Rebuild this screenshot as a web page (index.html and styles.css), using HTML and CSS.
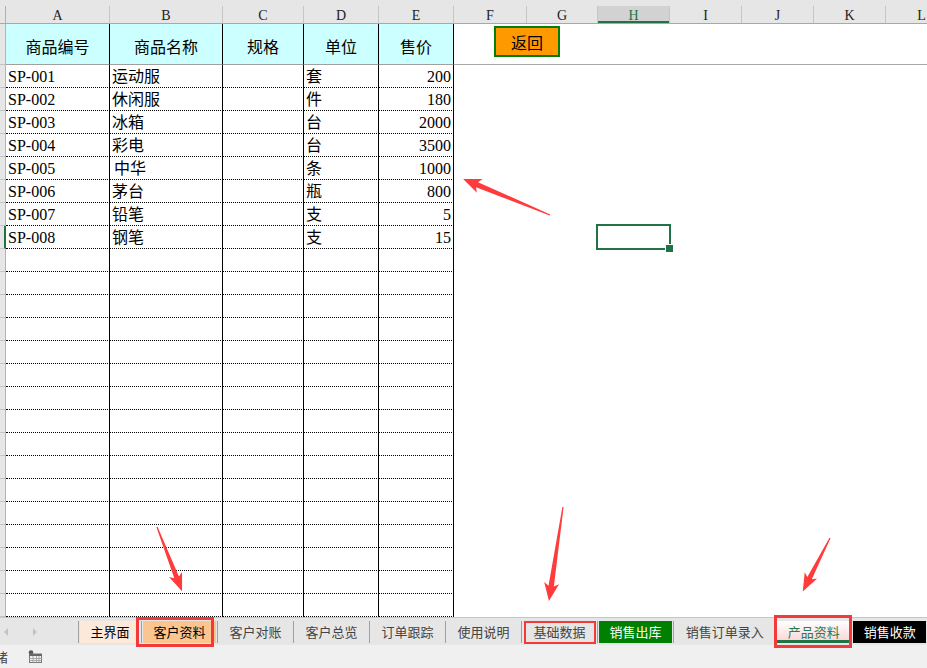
FILE: index.html
```html
<!DOCTYPE html>
<html lang="zh-CN">
<head>
  <meta charset="UTF-8" />
  <meta name="viewport" content="width=device-width, initial-scale=1" />
  <title>产品资料</title>
  <link rel="stylesheet" href="styles.css">
</head>
<body>
  <div class="app">
    <div class="sheet">
      <div class="colheads">
        <div class="ch corner"></div>
        <div class="ch w-a">A</div>
        <div class="ch w-b">B</div>
        <div class="ch w-c">C</div>
        <div class="ch w-d">D</div>
        <div class="ch w-e">E</div>
        <div class="ch w-f">F</div>
        <div class="ch w-g">G</div>
        <div class="ch w-h on">H</div>
        <div class="ch w-i">I</div>
        <div class="ch w-j">J</div>
        <div class="ch w-k">K</div>
        <div class="ch w-l">L</div>
      </div>

      <div class="body">
        <div class="grid">
          <div class="row head"><div class="rh"></div><div class="c">商品编号</div><div class="c">商品名称</div><div class="c">规格</div><div class="c">单位</div><div class="c">售价</div></div>
          <div class="row"><div class="rh"></div><div class="c">SP-001</div><div class="c">运动服</div><div class="c"></div><div class="c">套</div><div class="c num">200</div></div>
          <div class="row"><div class="rh"></div><div class="c">SP-002</div><div class="c">休闲服</div><div class="c"></div><div class="c">件</div><div class="c num">180</div></div>
          <div class="row"><div class="rh"></div><div class="c">SP-003</div><div class="c">冰箱</div><div class="c"></div><div class="c">台</div><div class="c num">2000</div></div>
          <div class="row"><div class="rh"></div><div class="c">SP-004</div><div class="c">彩电</div><div class="c"></div><div class="c">台</div><div class="c num">3500</div></div>
          <div class="row"><div class="rh"></div><div class="c">SP-005</div><div class="c indent">中华</div><div class="c"></div><div class="c">条</div><div class="c num">1000</div></div>
          <div class="row"><div class="rh"></div><div class="c">SP-006</div><div class="c">茅台</div><div class="c"></div><div class="c">瓶</div><div class="c num">800</div></div>
          <div class="row"><div class="rh"></div><div class="c">SP-007</div><div class="c">铅笔</div><div class="c"></div><div class="c">支</div><div class="c num">5</div></div>
          <div class="row"><div class="rh on"></div><div class="c">SP-008</div><div class="c">钢笔</div><div class="c"></div><div class="c">支</div><div class="c num">15</div></div>
          <div class="row"><div class="rh"></div><div class="c"></div><div class="c"></div><div class="c"></div><div class="c"></div><div class="c"></div></div>
          <div class="row"><div class="rh"></div><div class="c"></div><div class="c"></div><div class="c"></div><div class="c"></div><div class="c"></div></div>
          <div class="row"><div class="rh"></div><div class="c"></div><div class="c"></div><div class="c"></div><div class="c"></div><div class="c"></div></div>
          <div class="row"><div class="rh"></div><div class="c"></div><div class="c"></div><div class="c"></div><div class="c"></div><div class="c"></div></div>
          <div class="row"><div class="rh"></div><div class="c"></div><div class="c"></div><div class="c"></div><div class="c"></div><div class="c"></div></div>
          <div class="row"><div class="rh"></div><div class="c"></div><div class="c"></div><div class="c"></div><div class="c"></div><div class="c"></div></div>
          <div class="row"><div class="rh"></div><div class="c"></div><div class="c"></div><div class="c"></div><div class="c"></div><div class="c"></div></div>
          <div class="row"><div class="rh"></div><div class="c"></div><div class="c"></div><div class="c"></div><div class="c"></div><div class="c"></div></div>
          <div class="row"><div class="rh"></div><div class="c"></div><div class="c"></div><div class="c"></div><div class="c"></div><div class="c"></div></div>
          <div class="row"><div class="rh"></div><div class="c"></div><div class="c"></div><div class="c"></div><div class="c"></div><div class="c"></div></div>
          <div class="row"><div class="rh"></div><div class="c"></div><div class="c"></div><div class="c"></div><div class="c"></div><div class="c"></div></div>
          <div class="row"><div class="rh"></div><div class="c"></div><div class="c"></div><div class="c"></div><div class="c"></div><div class="c"></div></div>
          <div class="row"><div class="rh"></div><div class="c"></div><div class="c"></div><div class="c"></div><div class="c"></div><div class="c"></div></div>
          <div class="row"><div class="rh"></div><div class="c"></div><div class="c"></div><div class="c"></div><div class="c"></div><div class="c"></div></div>
          <div class="row"><div class="rh"></div><div class="c"></div><div class="c"></div><div class="c"></div><div class="c"></div><div class="c"></div></div>
          <div class="row"><div class="rh"></div><div class="c"></div><div class="c"></div><div class="c"></div><div class="c"></div><div class="c"></div></div>
        </div>

        <div class="blank">
          <div class="band">
            <button class="btn-back">返回</button>
          </div>
          <div class="sel"></div>
        </div>
      </div>
    </div>

    <div class="tabbar">
      <div class="nav">
        <svg width="40" height="10" viewBox="0 0 40 10">
          <polygon points="8,1 8,9 4,5" fill="#c3c3c3" />
          <polygon points="33,1 33,9 37,5" fill="#c3c3c3" />
        </svg>
      </div>
      <div class="tab t-home"><span>主界面</span></div>
      <div class="tab t-cust mark m1"><span>客户资料</span></div>
      <div class="tab"><span>客户对账</span></div>
      <div class="tab"><span>客户总览</span></div>
      <div class="tab"><span>订单跟踪</span></div>
      <div class="tab"><span>使用说明</span></div>
      <div class="tab mark m2"><span>基础数据</span></div>
      <div class="tab t-green"><span>销售出库</span></div>
      <div class="tab"><span>销售订单录入</span></div>
      <div class="tab t-active mark m3"><span>产品资料</span></div>
      <div class="tab t-black"><span>销售收款</span></div>
    </div>

    <div class="status">
      <span class="ready">就绪</span>
      <svg class="st-icon" width="14" height="13" viewBox="0 0 14 13">
        <circle cx="3" cy="2.5" r="2.3" fill="#555" />
        <rect x="1.5" y="4" width="12" height="8.5" fill="none" stroke="#777" />
        <rect x="1.5" y="4" width="12" height="2" fill="#666" />
        <path d="M1.5 8.5h12M1.5 10.5h12M5 6v6.5M8.5 6v6.5M11 6v6.5" stroke="#999" stroke-width="0.8" />
      </svg>
    </div>

    <svg class="arrows" width="927" height="668" viewBox="0 0 927 668">
      <g fill="#ff3b3b">
        <polygon transform="translate(550 215) rotate(202.5)" points="0,-0.6 79,-2.7 76,-7.5 94,0 76,7.5 79,2.7 0,0.6" />
        <polygon transform="translate(157 527) rotate(68.7)" points="0,-0.6 54,-2.5 51,-7 69,0 51,7 54,2.5 0,0.6" />
        <polygon transform="translate(563 507) rotate(98.5)" points="0,-0.6 80,-2.7 77,-7.5 95,0 77,7.5 80,2.7 0,0.6" />
        <polygon transform="translate(830 538) rotate(117)" points="0,-0.6 45,-2.5 42,-7 60,0 42,7 45,2.5 0,0.6" />
      </g>
    </svg>
  </div>
</body>
</html>
```

FILE: styles.css
```css
* {
  box-sizing: border-box;
}

body {
  margin: 0;
  background: #fff;
  font-family: "Liberation Serif", "Noto Sans CJK SC", serif;
}

.app {
  position: relative;
  width: 927px;
  height: 668px;
  overflow: hidden;
}

/* sheet */

.sheet {
  height: 617px;
  overflow: hidden;
}

.colheads {
  display: flex;
  height: 24px;
  padding-top: 6px;
  background: #e6e6e6;
  border-bottom: 1px solid #a8a8a8;
}

.ch {
  flex: none;
  height: 17px;
  padding-top: 2px;
  border-right: 1px solid #c6c6c6;
  text-align: center;
  font: 14px/15px "Liberation Serif", serif;
  color: #222;
}

.ch.on {
  background: #d2d2d2;
  color: #217346;
  box-shadow: inset 0 -2px #217346;
}

.corner { width: 6px; border-right-color: #b0b0b0; }
.w-a { width: 104px; }
.w-b { width: 113px; }
.w-c { width: 81px; }
.w-d { width: 75px; }
.w-e { width: 75px; }
.w-f { width: 73px; }
.w-g { width: 71px; }
.w-h { width: 72px; }
.w-i { width: 72px; }
.w-j { width: 72px; }
.w-k { width: 72px; }
.w-l { width: 72px; }

.body {
  display: flex;
}

.grid {
  flex: none;
  width: 454px;
}

.row {
  display: grid;
  grid-template-columns: 6px 104px 113px 81px 75px 75px;
  height: 23px;
}

.rh {
  background: #e6e6e6;
  border-right: 1px solid #b4b4b4;
  border-bottom: 1px solid #c4c4c4;
}

.rh.on {
  border-right: 2px solid #217346;
}

.c {
  padding: 1px 2px 0;
  border-right: 1px solid #000;
  border-bottom: 1px dotted #000;
  font-size: 16px;
  line-height: 21px;
  color: #000;
  white-space: nowrap;
  overflow: hidden;
}

.c.num {
  text-align: right;
}

.c.indent {
  padding-left: 4px;
}

.row.head {
  height: 41px;
}

.row.head .c {
  padding-top: 5px;
  background: #ccffff;
  border-bottom: 1px solid #a0a0a0;
  text-align: center;
  line-height: 35px;
  font-family: "Noto Sans CJK SC", sans-serif;
}

.blank {
  flex: 1;
}

.band {
  height: 41px;
  padding: 2px 0 0 40px;
  border-bottom: 1px solid #a8a8a8;
}

.btn-back {
  display: block;
  width: 66px;
  height: 31px;
  padding: 0;
  background: #ff9900;
  border: 2px solid #008000;
  font: 16px "Noto Sans CJK SC", sans-serif;
  color: #000;
}

.sel {
  position: relative;
  width: 75px;
  height: 26px;
  margin: 159px 0 0 142px;
  border: 2px solid #217346;
}

.sel::after {
  content: "";
  position: absolute;
  right: -5px;
  bottom: -5px;
  width: 7px;
  height: 7px;
  background: #217346;
  border: 1px solid #fff;
}

/* sheet tabs */

.tabbar {
  display: flex;
  align-items: flex-start;
  height: 28px;
  padding-top: 3px;
  background: #e6e6e6;
  border-top: 1px solid #c6c6c6;
}

.nav {
  flex: none;
  display: flex;
  align-items: center;
  width: 78px;
  height: 22px;
}

.tab {
  flex: none;
  height: 22px;
  padding: 0 1px;
  border-left: 1px solid #a0a0a0;
  font: 13px "Noto Sans CJK SC", sans-serif;
  color: #444;
}

.tab span {
  display: block;
  height: 22px;
  padding: 0 10.5px;
  line-height: 22px;
}

.t-home span { background: #fde9d9; color: #000; }
.t-cust span { background: #fbc590; color: #000; }
.t-green span { background: #008000; color: #fff; }
.t-black span { background: #000; color: #fff; }

.t-active span {
  background: linear-gradient(#fff, #fbd2d2);
  color: #2b7a4b;
  box-shadow: inset 0 -3px #217346;
}

.mark {
  position: relative;
}

.mark::after {
  content: "";
  position: absolute;
  border: 3px solid #f23a3a;
}

.m1::after { left: -6px; right: 3px; top: -4px; bottom: -4px; }
.m2::after { left: 2px; right: 1px; top: 0; bottom: -1px; border-width: 2px; }
.m3::after { left: -2px; right: -1px; top: -6px; bottom: -5px; }

/* status bar */

.status {
  display: flex;
  align-items: center;
  height: 23px;
  background: #f0f0f0;
  font: 13px "Noto Sans CJK SC", sans-serif;
  color: #444;
}

.ready {
  margin-left: -18px;
}

.st-icon {
  margin-left: 20px;
}

.arrows {
  position: absolute;
  left: 0;
  top: 0;
  pointer-events: none;
}
```
